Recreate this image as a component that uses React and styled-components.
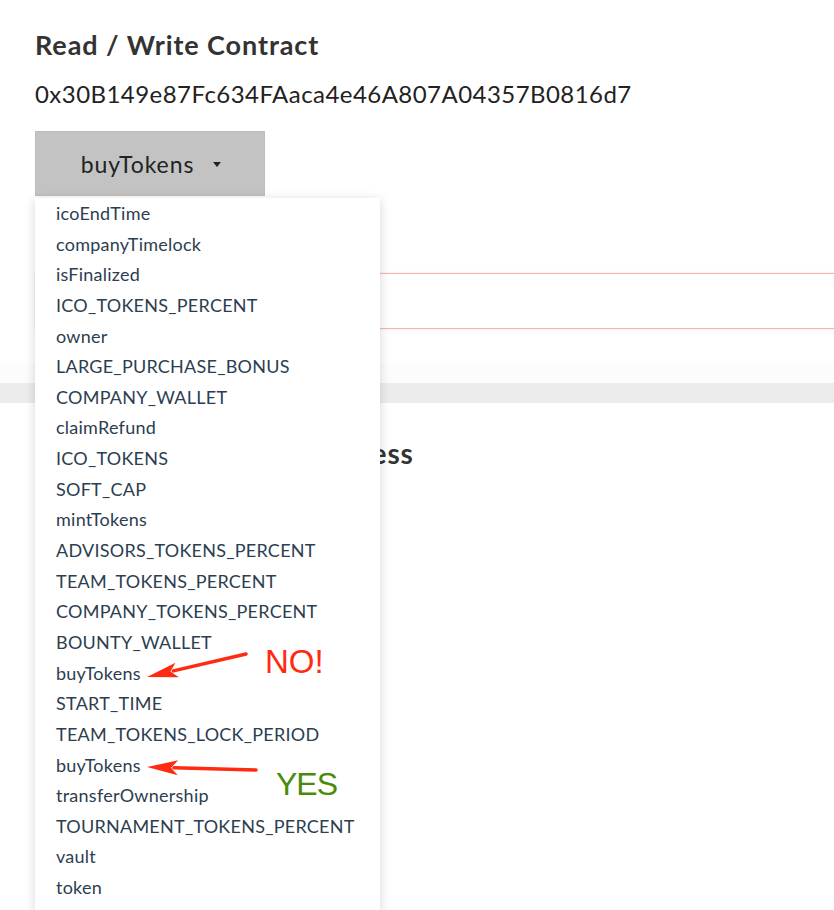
import React from "react";
import styled, { createGlobalStyle } from "styled-components";

const GlobalStyle = createGlobalStyle`
  html, body {
    margin: 0;
    padding: 0;
    background: #fff;
    overflow: hidden;
  }
  body {
    font-family: Lato, "Open Sans", sans-serif;
    color: #333;
  }
`;

const functions = [
  "icoEndTime",
  "companyTimelock",
  "isFinalized",
  "ICO_TOKENS_PERCENT",
  "owner",
  "LARGE_PURCHASE_BONUS",
  "COMPANY_WALLET",
  "claimRefund",
  "ICO_TOKENS",
  "SOFT_CAP",
  "mintTokens",
  "ADVISORS_TOKENS_PERCENT",
  "TEAM_TOKENS_PERCENT",
  "COMPANY_TOKENS_PERCENT",
  "BOUNTY_WALLET",
  "buyTokens",
  "START_TIME",
  "TEAM_TOKENS_LOCK_PERIOD",
  "buyTokens",
  "transferOwnership",
  "TOURNAMENT_TOKENS_PERCENT",
  "vault",
  "token",
];

const Page = styled.div`
  position: relative;
  width: 834px;
  height: 910px;
  overflow: hidden;
`;

const Section = styled.section`
  padding: 28px 0 0 35px;
`;

const Title = styled.h2`
  margin: 0;
  font-size: 27px;
  font-weight: 700;
  line-height: 34px;
  letter-spacing: 0.9px;
  color: #333;
`;

const Address = styled.div`
  margin-top: 16px;
  font-size: 24px;
  line-height: 32px;
  letter-spacing: 0.45px;
  color: #222;
`;

const DropdownWrap = styled.div`
  position: relative;
  margin-top: 21px;
  width: 230px;
`;

const Toggle = styled.button`
  display: flex;
  align-items: center;
  justify-content: center;
  gap: 19px;
  width: 230px;
  height: 65px;
  padding: 0 0 0 2px;
  background: #c3c3c3;
  border: 1px solid #bdbdbd;
  border-radius: 0;
  font-family: Lato, sans-serif;
  font-size: 23px;
  letter-spacing: 0.9px;
  color: #222;
`;

const Caret = styled.span`
  width: 0;
  height: 0;
  margin-top: 2px;
  border-left: 4.5px solid transparent;
  border-right: 4.5px solid transparent;
  border-top: 5px solid #222;
`;

const Menu = styled.ul`
  position: absolute;
  top: 67px;
  left: 0;
  z-index: 5;
  width: 345px;
  margin: 0;
  padding: 0 0 12px;
  list-style: none;
  background: #fff;
  box-shadow: 0 2px 10px rgba(0, 0, 0, 0.16);
`;

const MenuItem = styled.li`
  padding-left: 21px;
  height: 30.65px;
  line-height: 30px;
  font-size: 18px;
  letter-spacing: 0.25px;
  color: #2c3e50;
  white-space: nowrap;
`;

const Field = styled.div`
  margin-top: 77px;
  width: calc(100% + 10px);
  height: 54px;
  border: 1px solid #f6b4b4;
  border-right: none;
  box-shadow: 0 0 2px rgba(240, 120, 120, 0.3);
`;

const Spacer = styled.div`
  height: 20px;
  margin-top: 34px;
  margin-left: -35px;
  background: #fcfcfc;
`;

const Band = styled.div`
  height: 20px;
  background: #ececec;
`;

const SubTitle = styled.h2`
  margin: 0;
  padding: 33px 0 0 35px;
  font-size: 28px;
  font-weight: 700;
  line-height: 34px;
  letter-spacing: 0.9px;
  color: #333;
  white-space: nowrap;
`;

const Notes = styled.svg`
  position: absolute;
  top: 0;
  left: 0;
  z-index: 10;
  pointer-events: none;
`;

function Arrow({ from, to, color }) {
  const [x1, y1] = from;
  const [x2, y2] = to;
  const dx = x2 - x1;
  const dy = y2 - y1;
  const len = Math.hypot(dx, dy);
  const ux = dx / len;
  const uy = dy / len;
  const hl = 31;
  const hw = 7.5;
  const bx = x2 - ux * hl;
  const by = y2 - uy * hl;
  const px = -uy;
  const py = ux;
  return (
    <g fill={color} stroke={color}>
      <line x1={x1} y1={y1} x2={bx + ux * 4} y2={by + uy * 4} strokeWidth="3.5" strokeLinecap="round" />
      <polygon
        stroke="none"
        points={`${x2},${y2} ${bx + px * hw},${by + py * hw} ${bx + ux * 7},${by + uy * 7} ${bx - px * hw},${by - py * hw}`}
      />
    </g>
  );
}

export default function App() {
  return (
    <Page>
      <GlobalStyle />
      <Section>
        <Title>Read / Write Contract</Title>
        <Address>0x30B149e87Fc634FAaca4e46A807A04357B0816d7</Address>
        <DropdownWrap>
          <Toggle>
            buyTokens <Caret />
          </Toggle>
          <Menu>
            {functions.map((name, i) => (
              <MenuItem key={i}>{name}</MenuItem>
            ))}
          </Menu>
        </DropdownWrap>
        <Field />
        <Spacer />
      </Section>
      <Band />
      <SubTitle>Token Sale Contract Address</SubTitle>
      <Notes width="834" height="910" viewBox="0 0 834 910">
        <Arrow from={[246, 654]} to={[147, 677]} color="#ff2a12" />
        <Arrow from={[256, 770]} to={[147, 767]} color="#ff2a12" />
        <text x="265" y="673" fontFamily="Liberation Sans, Arial, sans-serif" fontSize="33" fill="#ff2a12">
          NO!
        </text>
        <text x="276" y="795" fontFamily="Liberation Sans, Arial, sans-serif" fontSize="32" fill="#4a8c0a" letterSpacing="-1">
          YES
        </text>
      </Notes>
    </Page>
  );
}
